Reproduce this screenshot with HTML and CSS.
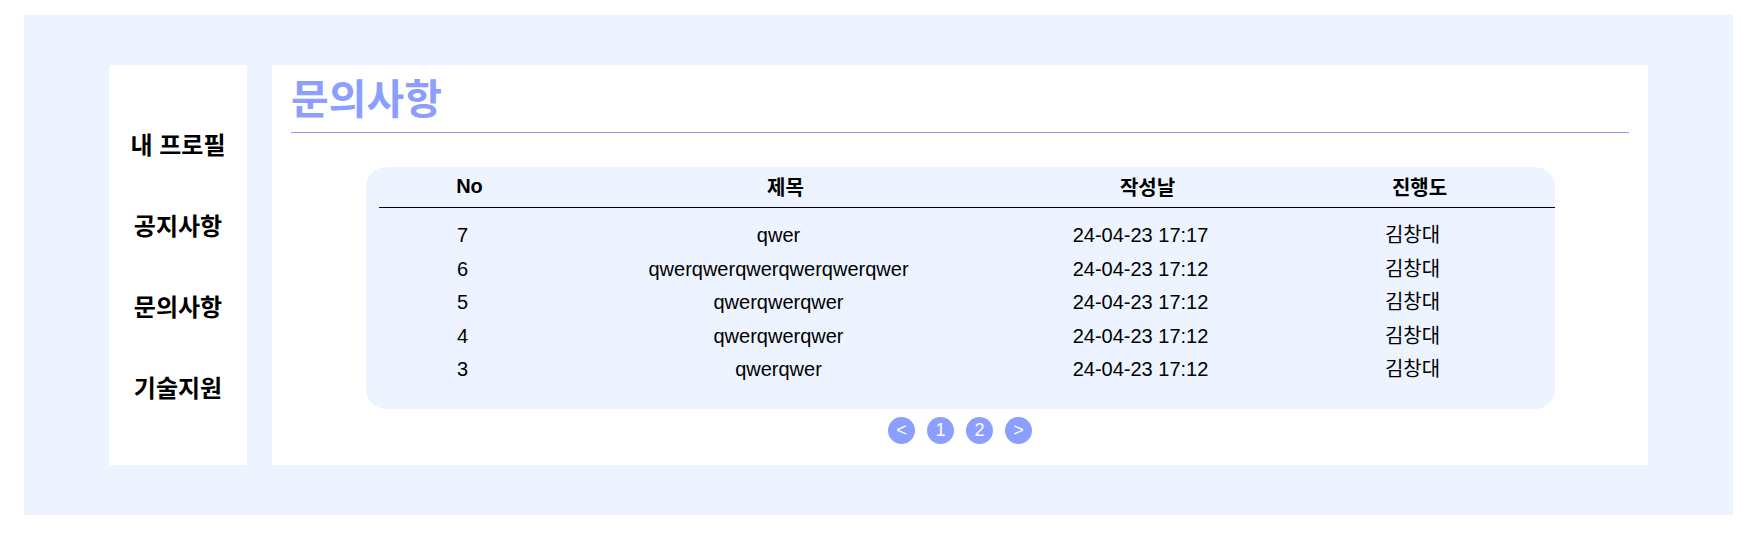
FILE: index.html
```html
<!DOCTYPE html>
<html lang="ko">
<head>
<meta charset="utf-8">
<title>문의사항</title>
<link rel="stylesheet" href="styles.css">
</head>
<body>
<div class="frame">
  <nav class="side">
    <a class="side-item">내 프로필</a>
    <a class="side-item">공지사항</a>
    <a class="side-item">문의사항</a>
    <a class="side-item">기술지원</a>
  </nav>
  <main class="main">
    <h1 class="title">문의사항</h1>
    <div class="rule"></div>
    <div class="board">
      <table class="list">
        <colgroup>
          <col class="c-no">
          <col class="c-title">
          <col class="c-date">
          <col class="c-state">
        </colgroup>
        <thead>
          <tr><th>No</th><th>제목</th><th>작성날</th><th>진행도</th></tr>
        </thead>
        <tbody>
          <tr><td>7</td><td>qwer</td><td>24-04-23 17:17</td><td>김창대</td></tr>
          <tr><td>6</td><td>qwerqwerqwerqwerqwerqwer</td><td>24-04-23 17:12</td><td>김창대</td></tr>
          <tr><td>5</td><td>qwerqwerqwer</td><td>24-04-23 17:12</td><td>김창대</td></tr>
          <tr><td>4</td><td>qwerqwerqwer</td><td>24-04-23 17:12</td><td>김창대</td></tr>
          <tr><td>3</td><td>qwerqwer</td><td>24-04-23 17:12</td><td>김창대</td></tr>
        </tbody>
      </table>
    </div>
    <div class="pager">
      <button class="page">&lt;</button>
      <button class="page">1</button>
      <button class="page">2</button>
      <button class="page">&gt;</button>
    </div>
  </main>
</div>
</body>
</html>
```
FILE: styles.css
```css
* { box-sizing: border-box; }

html, body {
  margin: 0;
  background: #ffffff;
  font-family: "Liberation Sans", "Noto Sans CJK KR", sans-serif;
  color: #000;
}

.frame {
  margin: 15px 25px 0 24px;
  padding: 50px 85px;
  background: #edf4ff;
  display: flex;
  gap: 25px;
  height: 500px;
}

.side {
  width: 138px;
  flex: none;
  background: #fff;
  display: flex;
  flex-direction: column;
  justify-content: center;
}

.side-item {
  height: 81px;
  display: flex;
  align-items: center;
  justify-content: center;
  font-family: "Noto Sans CJK KR", sans-serif;
  font-size: 24px;
  font-weight: 700;
  letter-spacing: 0;
  white-space: nowrap;
}

.main {
  flex: 1;
  background: #fff;
  padding: 0 19px;
  display: flex;
  flex-direction: column;
}

.title {
  margin: 0;
  height: 67px;
  line-height: 62px;
  font-family: "Noto Sans CJK KR", sans-serif;
  font-size: 41px;
  font-weight: 700;
  letter-spacing: 0;
  color: #8c9eff;
}

.rule {
  height: 1px;
  background: #8c9aef;
}

.board {
  width: 1189px;
  margin: 34px auto 0;
  padding: 0 0 22px 13px;
  background: #edf4ff;
  border-radius: 20px;
}

.list {
  width: 100%;
  table-layout: fixed;
  border-collapse: collapse;
  font-size: 20px;
}

.c-no { width: 182px; }
.c-title { width: 450px; }
.c-date { width: 274px; }
.c-state { width: 270px; }

.list th {
  height: 40px;
  padding: 0;
  font-weight: 700;
  text-align: center;
  border-bottom: 1px solid #000;
}

.list td {
  padding: 0 14px 0 0;
  height: 33.5px;
  line-height: 33.5px;
  text-align: center;
  white-space: nowrap;
}

.list tbody tr:first-child td {
  padding-top: 11.5px;
  height: 45px;
}

.pager {
  margin-top: 8px;
  display: flex;
  justify-content: center;
  gap: 12px;
}

.page {
  width: 27px;
  height: 27px;
  padding: 0;
  border: none;
  border-radius: 50%;
  background: #8c9eff;
  color: #fff;
  font-family: "Liberation Sans", sans-serif;
  font-size: 18px;
  line-height: 27px;
  text-align: center;
}
```
